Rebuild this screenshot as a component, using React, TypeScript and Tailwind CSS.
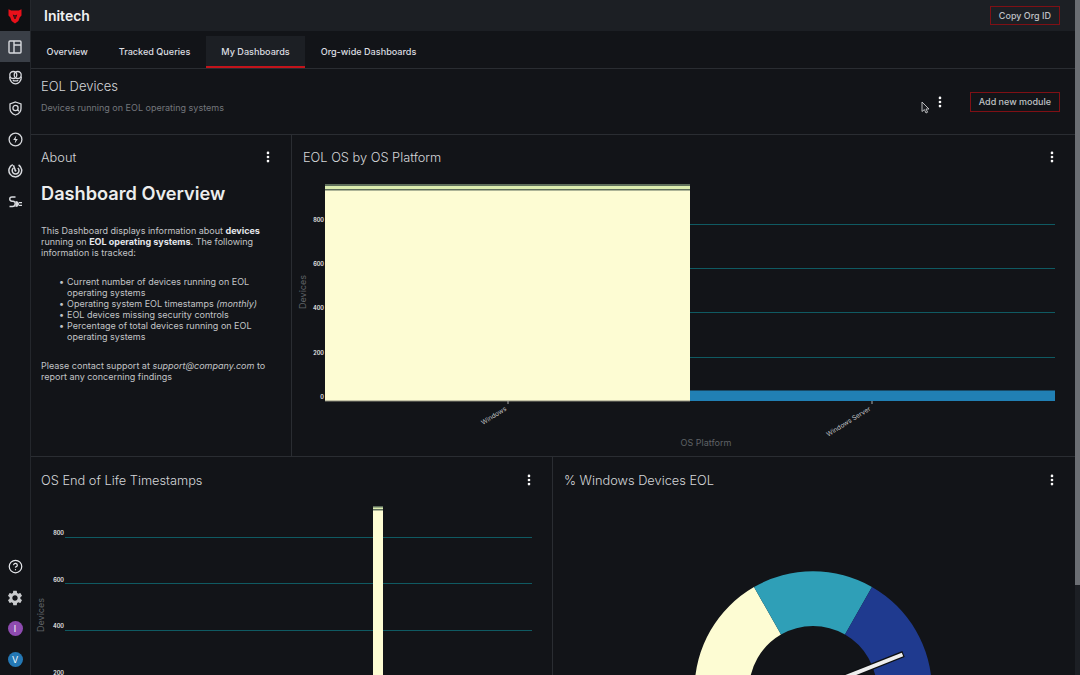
import { CircleHelp, EllipsisVertical } from "lucide-react";
import { MdSettings } from "react-icons/md";

const tabs = ["Overview", "Tracked Queries", "My Dashboards", "Org-wide Dashboards"];

function Logo() {
	return (
		<svg width="14" height="16" viewBox="0 0 14 16" fill="#e8101a">
			<path d="M0.5 1.2 L3.2 2.4 H10.8 L13.5 1.2 V7.5 L11.8 9.2 L10.4 13 L7 15.5 L3.6 13 L2.2 9.2 L0.5 7.5 Z" />
			<path d="M4.8 6.4 L7 7.5 L9.2 6.4 L7.7 10.8 H6.3 Z" fill="#0e1013" />
			<path d="M6.2 8.4 H7.8 L7 10 Z" fill="#e8101a" />
		</svg>
	);
}

function LayoutIcon() {
	return (
		<svg width="14" height="14" viewBox="0 0 14 14" fill="none" stroke="#d8dade" strokeWidth="1.4">
			<rect x="1" y="1" width="12" height="12" rx="1" />
			<path d="M6 1 V13 M6 5 H13" />
		</svg>
	);
}

function GroupIcon() {
	return (
		<svg width="15" height="15" viewBox="0 0 15 15" fill="none" stroke="#d8dade" strokeWidth="1.3">
			<circle cx="5.3" cy="5" r="3.5" />
			<circle cx="9.7" cy="5" r="3.5" />
			<path d="M1.6 6.5 C1.6 11 4.5 13.8 7.5 13.8 C10.5 13.8 13.4 11 13.4 6.5" />
			<path d="M4.8 10.2 C6 11.2 9 11.2 10.2 10.2" />
		</svg>
	);
}

function ShieldIcon() {
	return (
		<svg width="15" height="15" viewBox="0 0 15 15" fill="none" stroke="#d8dade" strokeWidth="1.3">
			<path d="M7.5 1 L13 3 V7.5 C13 10.5 10.5 13 7.5 14 C4.5 13 2 10.5 2 7.5 V3 Z" />
			<circle cx="7.5" cy="7" r="2.6" />
			<path d="M9.4 8.8 L11 10.2" />
		</svg>
	);
}

function BoltIcon() {
	return (
		<svg width="15" height="15" viewBox="0 0 15 15" fill="none" stroke="#d8dade" strokeWidth="1.3">
			<circle cx="7.5" cy="7.5" r="6.4" />
			<path d="M8.3 3.6 L5.2 8 H7.4 L6.7 11.4 L9.8 7 H7.6 Z" fill="#d8dade" stroke="none" />
		</svg>
	);
}

function RadarIcon() {
	return (
		<svg width="15" height="15" viewBox="0 0 15 15" fill="none" stroke="#d8dade" strokeWidth="1.5">
			<path d="M4.8 1.6 A6.4 6.4 0 1 0 10.6 2" />
			<path d="M5.4 5 A3.4 3.4 0 1 0 9.8 5" />
			<circle cx="7.5" cy="7.8" r="1" fill="#d8dade" stroke="none" />
			<path d="M7.5 7.8 L5.4 2.2" />
		</svg>
	);
}

function PlugIcon() {
	return (
		<svg width="15" height="14" viewBox="0 0 15 14" fill="none" stroke="#d8dade" strokeWidth="1.4">
			<path d="M7.5 2 H4 C1 2 1 6.2 4 6.2 H5 C8 6.2 8 11.5 4.5 11.5 H1.5" />
			<path d="M7.5 6 C10 6 11 7.5 11 9 C11 10.5 10 12 7.5 12 Z" fill="#d8dade" stroke="none" />
			<path d="M11 7.6 H14 M11 10.4 H14" />
		</svg>
	);
}

function MenuDots() {
	return <EllipsisVertical size={14} strokeWidth={2.6} className="text-white" />;
}

function PanelHeader({ title }: { title: string }) {
	return (
		<div className="flex items-center justify-between h-[44px]">
			<span className="pt-[2px] text-[12.8px] font-light text-[#d4d6d9]">{title}</span>
			<MenuDots />
		</div>
	);
}

function PlatformChart() {
	return (
		<svg width="783" height="299" viewBox="292 157 783 299" className="block -mt-[22px]">
			{[224.5, 268.5, 312.5, 357.5].map((y) => (
				<line key={y} x1="325" x2="1055" y1={y} y2={y} stroke="#0f5a62" strokeWidth="1" />
			))}
			<rect x="325" y="184" width="365" height="217" fill="#5f6f5c" />
			<rect x="325" y="186" width="365" height="3" fill="#dcedb0" />
			<rect x="325" y="190.5" width="365" height="210.5" fill="#fdfcd3" />
			<rect x="690" y="390.5" width="365" height="10.5" fill="#2180b4" />
			<line x1="325" x2="690" y1="401" y2="401" stroke="#8a8a7a" />
			{[
				["800", 221.5],
				["600", 265.5],
				["400", 309.5],
				["200", 354.5],
				["0", 398.5],
			].map(([label, y]) => (
				<text key={label} x="324" y={y} textAnchor="end" fontSize="5.5" fontWeight="600" fill="#eeeeee">
					{label}
				</text>
			))}
			<text x="306" y="292" textAnchor="middle" fontSize="9" fill="#5f6266" transform="rotate(-90 306 292)">
				Devices
			</text>
			<line x1="508" x2="508" y1="401" y2="404" stroke="#aaa" />
			<line x1="872" x2="872" y1="401" y2="404" stroke="#aaa" />
			<text x="507" y="410" textAnchor="end" fontSize="6.5" fill="#c0c2c5" transform="rotate(-32 507 410)">
				Windows
			</text>
			<text x="871" y="410" textAnchor="end" fontSize="6.5" fill="#c0c2c5" transform="rotate(-32 871 410)">
				Windows Server
			</text>
			<text x="706" y="446" textAnchor="middle" fontSize="9" fill="#5f6266">
				OS Platform
			</text>
		</svg>
	);
}

function TimestampChart() {
	return (
		<svg width="521" height="172" viewBox="31 503 521 172" className="block">
			{[537.5, 583.5, 630.5].map((y) => (
				<line key={y} x1="65" x2="532" y1={y} y2={y} stroke="#0f5a62" strokeWidth="1" />
			))}
			<rect x="373" y="506" width="10" height="169" fill="#5f6f5c" />
			<rect x="373" y="507.5" width="10" height="1.5" fill="#dcedb0" />
			<rect x="373" y="510.5" width="10" height="165" fill="#fdfcd3" />
			{[
				["800", 535],
				["600", 581.5],
				["400", 628],
				["200", 674.5],
			].map(([label, y]) => (
				<text key={label} x="64" y={y} textAnchor="end" fontSize="5.5" fontWeight="600" fill="#eeeeee">
					{label}
				</text>
			))}
			<text x="44" y="615" textAnchor="middle" fontSize="9" fill="#5f6266" transform="rotate(-90 44 615)">
				Devices
			</text>
		</svg>
	);
}

function GaugeChart() {
	return (
		<svg width="522" height="172" viewBox="553 503 522 172" className="block">
			<path d="M694.5 690 A119 119 0 0 1 754 587 L781 634.6 A64 64 0 0 0 749 690 Z" fill="#fdfcd3" />
			<path d="M754 587 A119 119 0 0 1 872 587 L845 634.6 A64 64 0 0 0 781 634.6 Z" fill="#2f9fb7" />
			<path d="M872 587 A119 119 0 0 1 932 690 L877 690 A64 64 0 0 0 845 634.6 Z" fill="#1f3a8f" />
			<line x1="813" y1="690" x2="903.5" y2="654" stroke="#0e1013" strokeWidth="6.5" />
			<line x1="813" y1="690" x2="902.5" y2="654.5" stroke="#eeeeee" strokeWidth="4" />
		</svg>
	);
}

export default function App() {
	return (
		<div className="relative flex h-[675px] w-[1080px] overflow-hidden bg-[#121418] text-white font-['Inter',sans-serif]">
			<aside className="flex flex-col items-center w-[31px] shrink-0 border-r border-[#24272c] bg-[#121418]">
				<div className="flex items-center justify-center w-full h-[31px] bg-[#0e1013]">
					<Logo />
				</div>
				<div className="flex items-center justify-center w-full h-[31px] bg-[#3a3f47]">
					<LayoutIcon />
				</div>
				{[GroupIcon, ShieldIcon, BoltIcon, RadarIcon, PlugIcon].map((Icon, i) => (
					<div key={i} className="flex items-center justify-center w-full h-[31px]">
						<Icon />
					</div>
				))}
				<div className="flex-1" />
				<div className="flex flex-col items-center w-full">
					<div className="flex items-center justify-center h-[31px]">
						<CircleHelp size={15} className="text-[#e5e7eb]" />
					</div>
					<div className="flex items-center justify-center h-[31px]">
						<MdSettings size={18} className="text-[#c8cacc]" />
					</div>
					<div className="flex items-center justify-center h-[31px]">
						<div className="flex items-center justify-center size-[15px] rounded-full bg-[#8e4bb0] text-[9px]">I</div>
					</div>
					<div className="flex items-center justify-center h-[31px]">
						<div className="flex items-center justify-center size-[15px] rounded-full bg-[#2478b5] text-[9px]">V</div>
					</div>
				</div>
			</aside>

			<main className="flex-1 min-w-0 flex flex-col">
				<div className="flex items-center justify-between h-[31px] shrink-0 pl-[13px] pr-[15.5px] bg-[#1c1f24]">
					<span className="text-[14px] font-semibold text-[#f0f1f2]">Initech</span>
					<button className="h-[19px] px-[7.5px] border-[1.5px] border-[#7f1015] text-[9px] font-medium text-[#bfc1c4]">
						Copy Org ID
					</button>
				</div>

				<div className="flex h-[38px] shrink-0 border-b border-[#2a2d32]">
					{tabs.map((tab) => (
						<div
							key={tab}
							className={
								tab === "My Dashboards"
									? "flex items-center px-[15.5px] mt-[5px] bg-[#1c1f24] shadow-[inset_0_-2px_0_#c3141b] text-[9.1px] font-medium text-[#dcdee1]"
									: "flex items-center px-[15.5px] mt-[5px] text-[9.1px] font-medium text-[#dcdee1]"
							}
						>
							{tab}
						</div>
					))}
				</div>

				<div className="flex items-center justify-between h-[66px] shrink-0 pl-[10px] pr-[15.5px] border-b border-[#2a2d32]">
					<div className="flex flex-col gap-[4.5px] pb-[11px]">
						<span className="text-[13px] font-light text-[#d4d6d9]">EOL Devices</span>
						<span className="text-[9px] text-[#73767b]">Devices running on EOL operating systems</span>
					</div>
					<div className="flex items-center gap-[23px]">
						<MenuDots />
						<button className="h-[20px] px-[7.5px] border-[1.5px] border-[#7f1015] text-[9px] font-medium text-[#bfc1c4]">
							Add new module
						</button>
					</div>
				</div>

				<div className="flex h-[322px] shrink-0 border-b border-[#2a2d32]">
					<section className="w-[261px] shrink-0 pl-[10px] pr-[16px] border-r border-[#2a2d32]">
						<PanelHeader title="About" />
						<h2 className="text-[18.2px] font-semibold text-[#eceded] mt-[1px] mb-[18px]">Dashboard Overview</h2>
						<p className="text-[9px] leading-[11px] text-[#c2c4c7]">
							This Dashboard displays information about <b className="font-bold text-[#e5e7eb]">devices</b> running on{" "}
							<b className="font-bold text-[#e5e7eb]">EOL operating systems</b>. The following information is tracked:
						</p>
						<ul className="pl-[18px] mt-[18px] text-[9px] leading-[11px] text-[#c2c4c7]">
							<li className="flex">
								<span className="w-[8px] shrink-0">•</span>
								<span>Current number of devices running on EOL operating systems</span>
							</li>
							<li className="flex">
								<span className="w-[8px] shrink-0">•</span>
								<span>
									Operating system EOL timestamps <i>(monthly)</i>
								</span>
							</li>
							<li className="flex">
								<span className="w-[8px] shrink-0">•</span>
								<span>EOL devices missing security controls</span>
							</li>
							<li className="flex">
								<span className="w-[8px] shrink-0">•</span>
								<span>Percentage of total devices running on EOL operating systems</span>
							</li>
						</ul>
						<p className="mt-[17.5px] text-[9px] leading-[11px] text-[#c2c4c7]">
							Please contact support at <i>support@company.com</i> to report any concerning findings
						</p>
					</section>
					<section className="flex-1 min-w-0">
						<div className="pl-[11px] pr-[16px]">
							<PanelHeader title="EOL OS by OS Platform" />
						</div>
						<PlatformChart />
					</section>
				</div>

				<div className="flex flex-1 min-h-0">
					<section className="w-[522px] shrink-0 border-r border-[#2a2d32]">
						<div className="pl-[10px] pr-[16px] py-[1px]">
							<PanelHeader title="OS End of Life Timestamps" />
						</div>
						<TimestampChart />
					</section>
					<section className="flex-1 min-w-0">
						<div className="pl-[11px] pr-[16px] py-[1px]">
							<PanelHeader title="% Windows Devices EOL" />
						</div>
						<GaugeChart />
					</section>
				</div>
			</main>

			<div className="w-[5px] shrink-0 bg-[#1c1f24]">
				<div className="h-[585px] bg-[#6b6e73]" />
			</div>

			<svg width="9" height="13" viewBox="0 0 9 13" className="absolute left-[920.5px] top-[101px]">
				<path d="M1 1 V10.5 L3.4 8.6 L5 12 L6.6 11.2 L5 8 H8 Z" fill="#1a1c20" stroke="#c8cacc" strokeWidth="0.9" />
			</svg>
		</div>
	);
}
